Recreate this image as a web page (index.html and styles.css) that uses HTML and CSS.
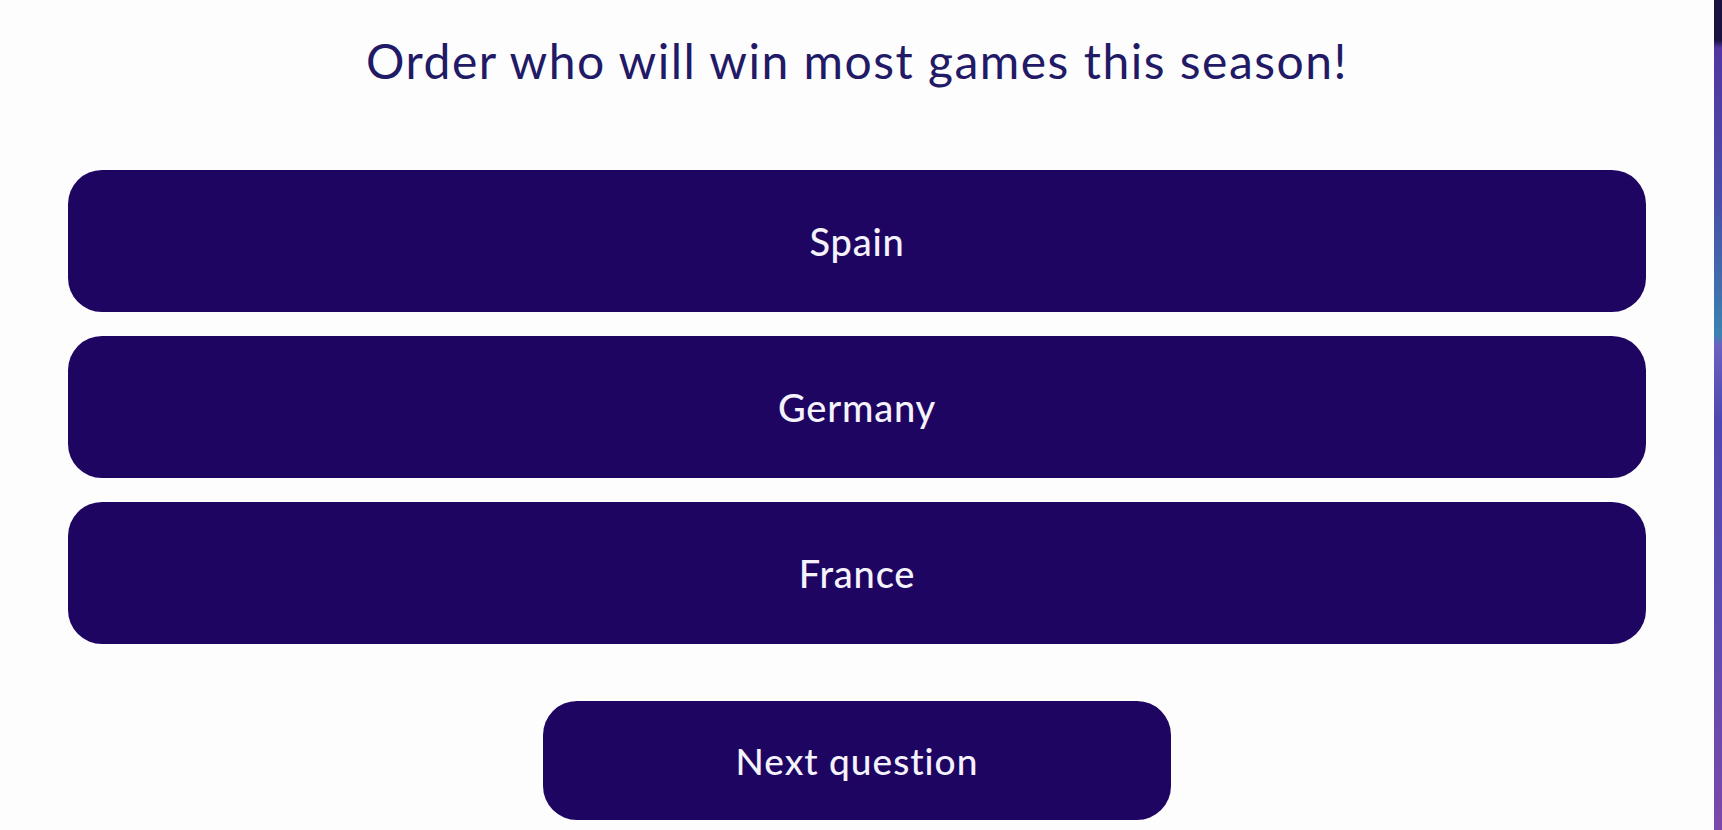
FILE: index.html
```html
<!DOCTYPE html>
<html lang="en">
<head>
<meta charset="utf-8">
<title>Quiz</title>
<link rel="stylesheet" href="styles.css">
</head>
<body>
<div class="screen">
  <main class="quiz">
    <h1 class="question">Order who will win most games this season!</h1>
    <ul class="options">
      <li class="option">Spain</li>
      <li class="option">Germany</li>
      <li class="option">France</li>
    </ul>
    <div class="actions">
      <button class="next">Next question</button>
    </div>
  </main>
  <div class="edge"></div>
</div>
</body>
</html>
```
FILE: styles.css
```css
html, body {
  margin: 0;
  padding: 0;
  background: #fdfdfd;
}
.screen {
  display: flex;
  width: 1722px;
  height: 830px;
  overflow: hidden;
}
.quiz {
  flex: 1;
  display: flex;
  flex-direction: column;
  padding: 0 68px;
  font-family: Lato, "Open Sans", sans-serif;
}
.question {
  margin: 33px 0 0;
  height: 56px;
  line-height: 56px;
  text-align: center;
  font-weight: 400;
  font-size: 48px;
  color: #221a66;
  letter-spacing: 1.5px;
}
.options {
  list-style: none;
  margin: 81px 0 0;
  padding: 0;
  display: flex;
  flex-direction: column;
  gap: 24px;
}
.option {
  height: 142px;
  border-radius: 34px;
  background: #1e0562;
  color: #f4f2fb;
  display: flex;
  align-items: center;
  justify-content: center;
  font-size: 38px;
  font-weight: 500;
  letter-spacing: 0.8px;
}
.actions {
  display: flex;
  justify-content: center;
  margin-top: 57px;
}
.next {
  width: 628px;
  height: 119px;
  border: 0;
  border-radius: 34px;
  background: #1e0562;
  color: #f4f2fb;
  font-family: Lato, "Open Sans", sans-serif;
  font-size: 37px;
  font-weight: 500;
  letter-spacing: 1px;
  padding: 0;
}
.edge {
  width: 8px;
  flex: none;
  background: linear-gradient(to bottom, #1a1240 0, #1a1240 40px, #5236a2 48px, #4a4ea8 200px, #3e74ae 300px, #3c82b2 335px, #6a62c0 345px, #4f48b0 420px, #5a4cb0 600px, #7a48aa 830px);
}
```
